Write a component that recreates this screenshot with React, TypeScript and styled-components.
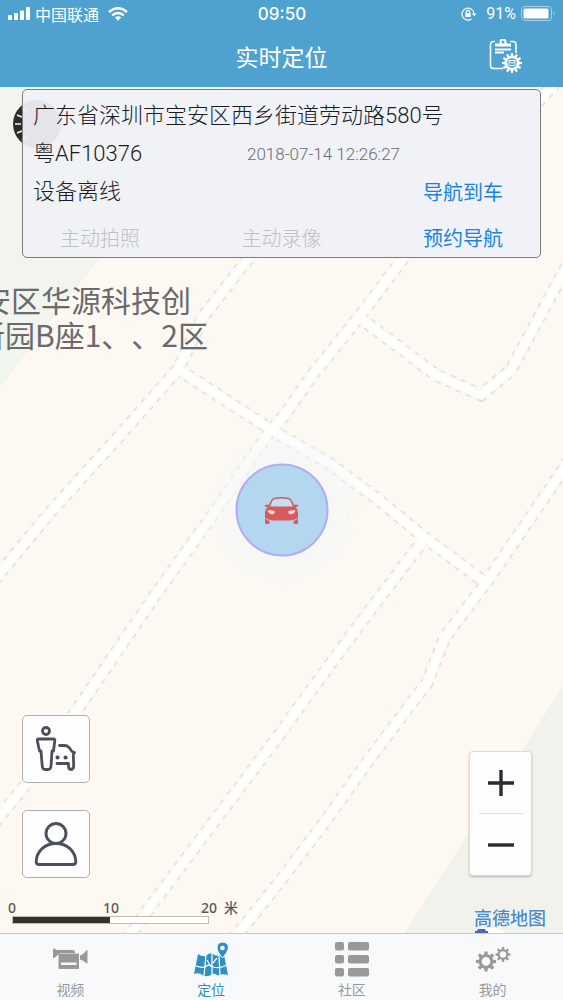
import React from "react";
import styled, { createGlobalStyle } from "styled-components";

const GlobalStyle = createGlobalStyle`
  * { box-sizing: border-box; }
  body {
    margin: 0;
    background: #fdf9f2;
    font-family: "Liberation Sans", "Noto Sans CJK SC", sans-serif;
  }
  button {
    margin: 0;
    padding: 0;
    border: 0;
    background: none;
    font: inherit;
    color: inherit;
    cursor: pointer;
  }
  svg { display: block; }
`;

const Screen = styled.div`
  display: flex;
  flex-direction: column;
  min-height: 100vh;
  overflow: hidden;
`;

const Header = styled.header`
  background: #4fa2d0;
  color: #fff;
`;

const StatusBar = styled.div`
  display: grid;
  grid-template-columns: 1fr auto 1fr;
  align-items: center;
  height: 28px;
  padding: 0 7px 0 8px;
  font-size: 16px;
  line-height: 20px;
`;

const StatusGroup = styled.div<{ $end?: boolean }>`
  display: flex;
  align-items: center;
  gap: ${(p) => (p.$end ? 5 : 9)}px;
  justify-content: ${(p) => (p.$end ? "flex-end" : "flex-start")};
  font-family: ${(p) => (p.$end ? "Roboto" : '"Noto Sans CJK SC"')}, sans-serif;
`;

const Carrier = styled.span`
  display: flex;
  align-items: center;
  gap: 5px;
`;

const Charge = styled.span`
  margin-left: 4px;
`;

const Clock = styled.time`
  font-family: Inter, sans-serif;
  font-size: 17px;
  font-weight: 500;
`;

const TitleBar = styled.div`
  display: grid;
  grid-template-columns: 1fr auto 1fr;
  align-items: center;
  height: 59px;
  padding: 0 40px 3px;
`;

const Title = styled.h1`
  grid-column: 2;
  margin: 0;
  font-family: "Noto Sans CJK SC", sans-serif;
  font-size: 23px;
  font-weight: 400;
  line-height: 32px;
`;

const SettingsButton = styled.button`
  justify-self: end;
`;

const MapArea = styled.main`
  position: relative;
  flex: 1;
  display: flex;
  flex-direction: column;
  justify-content: space-between;
  overflow: hidden;
`;

const MapCanvas = styled.svg`
  position: absolute;
  inset: 0;
  width: 100%;
  height: 100%;
`;

const PlaceName = styled.div`
  position: absolute;
  top: 195px;
  left: -25px;
  color: #6a6a6c;
  font-family: "Noto Sans CJK SC", sans-serif;
  font-size: 30px;
  font-weight: 400;
  line-height: 35px;
  text-indent: 6px;
  text-spacing-trim: space-all;
  font-kerning: none;
  white-space: nowrap;

  span {
    display: block;
  }
  span + span {
    text-indent: 0;
  }
`;

const CarPin = styled.div`
  position: absolute;
  top: 50%;
  left: 50%;
  display: grid;
  place-items: center;
  width: 93px;
  height: 93px;
  border: 2px solid #b3acf0;
  border-radius: 50%;
  background: #b4d7f0;
  box-shadow: 0 0 20px 24px rgba(244, 246, 248, 0.6);
  transform: translate(-50%, -50%);
`;

const InfoCard = styled.section`
  position: relative;
  margin: 2px 22px 0;
  height: 169px;
  padding: 7px 10px 0;
  border: 1px solid #7c7d80;
  border-radius: 5px;
  background: rgba(239, 241, 246, 0.94);
  color: #1c1c1f;
  font-family: Roboto, "Noto Sans CJK SC", sans-serif;
  font-size: 22px;
  font-weight: 300;
  line-height: 38px;
`;

const Address = styled.p`
  margin: 0;
  white-space: nowrap;
`;

const InfoRow = styled.div`
  display: grid;
  grid-template-columns: 214px 1fr auto;
  align-items: center;
  height: 38px;
`;

const Stamp = styled.time`
  color: #6c6d71;
  font-size: 17px;
`;

const ActionRow = styled.div`
  display: flex;
  justify-content: space-between;
  margin-top: 9px;
  padding: 0 27px;
  height: 38px;
`;

const ActionButton = styled.button<{ $inset?: boolean }>`
  margin-right: ${(p) => (p.$inset ? 27 : 0)}px;
  padding-top: ${(p) => (p.$inset ? 2 : 0)}px;
  font-size: 20px;
  font-weight: 400;
  line-height: 36px;
  color: #1b82e0;
  &:disabled {
    font-weight: 300;
    color: #bfc0c4;
    cursor: default;
  }
`;

const Controls = styled.div`
  position: relative;
  padding-bottom: 5px;
`;

const ControlRow = styled.div`
  display: flex;
  align-items: flex-end;
  justify-content: space-between;
  padding: 0 31px 0 22px;
`;

const LocateStack = styled.div`
  display: grid;
  gap: 27px;
`;

const LocateButton = styled.button`
  display: grid;
  place-items: center;
  width: 68px;
  height: 68px;
  border: 1px solid #aeaeb0;
  border-radius: 5px;
  background: #fefeff;
`;

const ZoomPanel = styled.div`
  display: flex;
  flex-direction: column;
  align-items: center;
  width: 63px;
  margin-bottom: 2px;
  border: 1px solid #dcdcdc;
  border-radius: 4px;
  background: #fdfdfe;
  box-shadow: 0 1px 2px rgba(0, 0, 0, 0.25);
`;

const ZoomButton = styled.button`
  display: grid;
  place-items: center;
  width: 100%;
  height: 61px;
`;

const ZoomDivider = styled.span`
  width: 44px;
  height: 1px;
  background: #dfdfe0;
`;

const FootRow = styled.div`
  display: flex;
  justify-content: space-between;
  align-items: flex-start;
  margin-top: 21px;
  padding: 0 17px 0 8px;
  height: 29px;
`;

const ScaleLabels = styled.div`
  display: grid;
  grid-template-columns: 95px 98px 23px auto;
  font-family: "Noto Sans", "Noto Sans CJK SC", sans-serif;
  font-size: 14px;
  font-weight: 500;
  line-height: 17px;
  color: #5a5856;
`;

const ScaleTrack = styled.div`
  width: 197px;
  height: 8px;
  margin-left: 4px;
  border: 1px solid #c0bfac;
  background: linear-gradient(to right, #35322d 50%, #fffefa 50%);
`;

const MapBrand = styled.span`
  margin-top: 8px;
  color: #4a8cca;
  font-family: "Noto Sans CJK SC", sans-serif;
  font-size: 18px;
  font-weight: 500;
  line-height: 20px;
  text-shadow: 0 0 2px #fff;
`;

const TabBar = styled.nav`
  display: grid;
  grid-template-columns: repeat(4, 1fr);
  height: 67px;
  border-top: 1px solid #c9c9cb;
  background: #f8f9fb;
`;

const Tab = styled.a<{ $active?: boolean }>`
  display: flex;
  flex-direction: column;
  align-items: center;
  padding-top: 7px;
  gap: 2px;
  color: ${(p) => (p.$active ? "#2f8fc1" : "#98999b")};
  font-family: "Noto Sans CJK SC", sans-serif;
  font-size: 14px;
  line-height: 20px;
  text-decoration: none;
`;

const ROADS = [
  "M255 250 L203 317 L178 369 L130 424 L47 516 L0 573 L-10 585",
  "M178 369 L270 429 L330 464 L380 501 L425 538 L486 583",
  "M410 249 L402 260 L359 317 L314 373 L283 417 L268 434 L219 506 L154 597 L81 704 L27 783 L-5 822",
  "M359 317 L436 375 L481 395 L511 370 L534 327 L570 260",
  "M575 450 L563 470 L535 511 L486 583 L445 637 L427 683 L414 700 L371 757 L324 823 L281 880 L232 941",
  "M425 538 L359 625 L304 700 L282 731 L150 907 L126 941",
  "M530 110 L560 78",
];

function CityMap() {
  return (
    <MapCanvas viewBox="0 87 563 846" preserveAspectRatio="xMidYMid slice" aria-hidden="true">
      <rect x="-600" y="-600" width="1800" height="2200" fill="#fdf9f2" />
      <path d="M-600 87 H230 L100 258 L0 387 L-600 1160 Z" fill="#f2f4ee" />
      <path d="M1100 0 L563 686 L472 828 L400 940 H1100 Z" fill="#f2f2ec" />
      {ROADS.map((d) => (
        <path key={d} d={d} fill="none" stroke="#dfdfde" strokeWidth="13" strokeDasharray="5 6" />
      ))}
      {ROADS.map((d) => (
        <path key={d} d={d} fill="none" stroke="#fdfbf7" strokeWidth="10" strokeLinejoin="round" />
      ))}
      {ROADS.map((d) => (
        <path key={d} d={d} fill="none" stroke="#fffffd" strokeWidth="6" strokeLinejoin="round" />
      ))}
      <circle cx="37" cy="124" r="24" fill="#2e2d2b" />
      <path d="M15 124h6M17 115l5 2M17 133l5-2M22 108l4 4M22 140l4-4" stroke="#f4f4f0" strokeWidth="1.5" />
      <ellipse cx="490" cy="933" rx="14" ry="5" fill="#fff" />
      <path d="M475 933V931H477L478 929H485L486 931H488V933Z" fill="#4a67c0" />
    </MapCanvas>
  );
}

function CarIcon() {
  return (
    <svg width="36" height="28" viewBox="0 0 36 28">
      <path d="M6 10 Q8 2.500 11 2 Q18 .6 25 2 Q28 2.500 30 10" fill="#c5def0" stroke="#c85c64" strokeWidth="1.500" />
      <path d="M1 8.500 L5 8 L6 10 H30 L31 8 L35 8.500 L34.500 10 L32 10.500 Q34.500 13 34.500 16 V26 Q34.500 27.500 33 27.500 H31.500 Q30 27.500 30 26 V24 H6 V26 Q6 27.500 4.500 27.500 H3 Q1.500 27.500 1.500 26 V16 Q1.500 13 4 10.500 L1.500 10 Z" fill="#d95a5c" />
      <path d="M2 22 Q4 24 8 24 M34 22 Q32 24 28 24" stroke="#b4d7f0" strokeWidth="1" fill="none" />
      <path d="M4 14 Q8 13 11.500 15 Q11.500 17.500 9 17.800 Q5 17.500 4 14 Z M32 14 Q28 13 24.500 15 Q24.500 17.500 27 17.800 Q31 17.500 32 14 Z" fill="#f3dfe3" />
    </svg>
  );
}

function gearPath(cx: number, cy: number, outer: number, inner: number, teeth: number, hole: number) {
  const step = (Math.PI * 2) / teeth;
  const at = (r: number, a: number) => `${(cx + r * Math.cos(a)).toFixed(2)} ${(cy + r * Math.sin(a)).toFixed(2)}`;
  const points: string[] = [];
  for (let i = 0; i < teeth; i += 1) {
    const a = i * step - Math.PI / 2;
    points.push(at(inner, a - step * 0.3), at(outer, a - step * 0.2), at(outer, a + step * 0.2), at(inner, a + step * 0.3));
  }
  return `M${points.join("L")}Z M${cx - hole} ${cy}a${hole} ${hole} 0 1 0 ${hole * 2} 0a${hole} ${hole} 0 1 0 ${-hole * 2} 0Z`;
}

function ClipboardGearIcon() {
  return (
    <svg width="34" height="36" viewBox="0 0 34 36" fill="none">
      <path d="M6 3.500H4.500Q1.500 3.500 1.500 6.500V27Q1.500 30.500 4.500 30.500H14M21 3.500H24Q27 3.500 27 6.500V15" stroke="#fff" strokeWidth="1.600" />
      <path d="M6 5.500H10.500V3Q10.500 1 12.500 1H15.500Q17.500 1 17.500 3V5.500H22V8.500H6Z" fill="#fff" />
      <circle cx="14" cy="4" r="1.500" fill="#4fa2d0" />
      <path d="M6 11.500H22M6 14.500H15" stroke="#fff" strokeWidth="1.800" />
      <path d={gearPath(23, 25, 10, 7.5, 12, 4.8)} fill="#fff" fillRule="evenodd" />
      <rect x="20" y="22.500" width="6" height="5" rx="1" stroke="#fff" />
      <path d="M20 23l3 2.500l3-2.500" stroke="#fff" />
    </svg>
  );
}

function PersonCarIcon() {
  return (
    <svg width="42" height="48" viewBox="0 0 42 48" fill="none" stroke="#4a505f" strokeWidth="2.800" strokeLinecap="round" strokeLinejoin="round">
      <circle cx="11" cy="6" r="3.500" />
      <path d="M3.500 14H18.500Q20 14 19.800 15.500L18.500 26H17L16 41Q15.800 44.500 13 44.500H10Q7.500 44.500 7.200 41L6 26H4.500L2.300 15.500Q2 14 3.500 14Z" />
      <path d="M24.500 20.500H30Q32.500 20.500 34.500 23L37 26.500L39.500 27.500L38.300 29.500L38.700 40Q38.700 44.500 36 44.500Q33.500 44.500 33.500 41V38.500H22" />
      <path d="M22.500 32.500h.1M30.500 32.500h.1" strokeWidth="4.200" />
    </svg>
  );
}

function PersonIcon() {
  return (
    <svg width="44" height="46" viewBox="0 0 44 46" fill="none" stroke="#4a505f" strokeWidth="2.900" strokeLinejoin="round">
      <circle cx="22" cy="12.500" r="10" />
      <path d="M22 22.500C11 22.500 2.500 30 2.200 40.500Q2.200 43.500 5 43.500H39Q41.800 43.500 41.800 40.500C41.500 30 33 22.500 22 22.500Z" />
    </svg>
  );
}

function VideoIcon() {
  return (
    <svg width="36" height="36" viewBox="0 0 36 36" fill="currentColor">
      <path d="M1 8.500Q1 7.500 2 7.500L5 9H21Q23 9 23 12H8L4 15.500L2.500 17Q1 17 1 16Z" />
      <path fillRule="evenodd" d="M7.500 12.500H26Q27 12.500 27 13.500V27Q27 28 26 28H7.500Q6.500 28 6.500 27V13.500Q6.500 12.500 7.500 12.500ZM9 21.500V24H24.500V21.500Z" />
      <path d="M28 14.500Q32 13.500 34 9.500L35.500 9V22.500L34 22Q32 19.500 28 18.500Z" />
    </svg>
  );
}

function MapTabIcon() {
  return (
    <svg width="36" height="36" viewBox="0 0 36 36" fill="none">
      <path d="M5 13Q9 16 12.500 15Q16 12 19 12Q22 15.500 26 14.500L31 14L35 34Q29 32.500 25 34.500Q20 31 17 34.500Q11 36.500 8 33Q4 31.500 1 33Z" fill="currentColor" />
      <path d="M13 14L11 35M19 12V35M26 14L27 35M2 24.500Q8 27 12 26Q17 22 20 26Q26 28 34 24M14 19L18 26M20 22L24 17" stroke="#f8f9fb" strokeWidth="1.300" />
      <path d="M29.500 1Q35.500 1.500 35.500 7Q35 10.500 29.500 17Q24 10.500 24 7Q24 1.500 29.500 1Z" fill="currentColor" stroke="#f8f9fb" />
      <circle cx="29.500" cy="7" r="2.300" fill="#f8f9fb" />
    </svg>
  );
}

function ListIcon() {
  return (
    <svg width="36" height="36" viewBox="0 0 36 36" fill="currentColor">
      {[1, 14, 27].map((y) => (
        <g key={y}>
          <rect x="1" y={y} width="9" height="8.500" rx="2" />
          <rect x="14" y={y} width="21" height="8.500" rx="2" />
        </g>
      ))}
    </svg>
  );
}

function GearsIcon() {
  return (
    <svg width="36" height="36" viewBox="0 0 36 36" fill="currentColor" fillRule="evenodd">
      <path d={gearPath(11, 20.5, 10.2, 7.4, 8, 4.4)} />
      <path d={gearPath(28, 13.5, 7.5, 5.4, 8, 3.2)} />
    </svg>
  );
}

function SignalIcon() {
  return (
    <svg width="22" height="14" viewBox="0 0 22 14" fill="#fff">
      <rect x="0" y="8" width="4" height="5" rx="1" />
      <rect x="6" y="6" width="4" height="7" rx="1" />
      <rect x="12" y="3.500" width="4" height="9.500" rx="1" />
      <rect x="18" y="0" width="4" height="13" rx="1" />
    </svg>
  );
}

function WifiIcon() {
  return (
    <svg width="20" height="14" viewBox="0 0 20 14" fill="none" stroke="#fff" strokeWidth="2.400">
      <path d="M1 5Q10-2.500 19 5M4.200 8.300Q10 3.500 15.800 8.300" />
      <path d="M6.800 10.500Q10 8 13.200 10.500L10 13.700Z" fill="#fff" stroke="none" />
    </svg>
  );
}

function LockIcon() {
  return (
    <svg width="16" height="14" viewBox="0 0 16 14" fill="none" stroke="#fff" strokeWidth="1.200">
      <path d="M10.500 12A6 6 0 1 1 13 7" />
      <path d="M11 6.500H15.400L13.200 9.500Z" fill="#fff" stroke="none" />
      <rect x="4.300" y="6" width="5.400" height="4" fill="#fff" stroke="none" />
      <path d="M5.300 6.500V5Q5.300 3.400 7 3.400T8.700 5V6.500" />
    </svg>
  );
}

function BatteryIcon() {
  return (
    <svg width="35" height="16" viewBox="0 0 35 16">
      <rect x=".5" y=".5" width="30" height="14" rx="3.500" fill="none" stroke="#a8d0e7" />
      <rect x="2.500" y="2.500" width="25" height="10" rx="1.500" fill="#fff" />
      <path d="M32.500 5Q34.500 7.500 32.500 10Z" fill="#a8d0e7" />
    </svg>
  );
}

const TABS = [
  { id: "video", label: "视频", Icon: VideoIcon },
  { id: "locate", label: "定位", Icon: MapTabIcon },
  { id: "community", label: "社区", Icon: ListIcon },
  { id: "mine", label: "我的", Icon: GearsIcon },
];

export default function App() {
  return (
    <Screen>
      <GlobalStyle />
      <Header>
        <StatusBar>
          <StatusGroup>
            <Carrier>
              <SignalIcon />
              中国联通
            </Carrier>
            <WifiIcon />
          </StatusGroup>
          <Clock>09:50</Clock>
          <StatusGroup $end>
            <LockIcon />
            <Charge>91%</Charge>
            <BatteryIcon />
          </StatusGroup>
        </StatusBar>
        <TitleBar>
          <Title>实时定位</Title>
          <SettingsButton aria-label="设置">
            <ClipboardGearIcon />
          </SettingsButton>
        </TitleBar>
      </Header>

      <MapArea>
        <CityMap />
        <PlaceName>
          <span>安区华源科技创</span>
          <span>新园B座1、、2区</span>
        </PlaceName>
        <CarPin>
          <CarIcon />
        </CarPin>

        <InfoCard>
          <Address>广东省深圳市宝安区西乡街道劳动路580号</Address>
          <InfoRow>
            <span>粤AF10376</span>
            <Stamp dateTime="2018-07-14T12:26:27">2018-07-14 12:26:27</Stamp>
          </InfoRow>
          <InfoRow>
            <span>设备离线</span>
            <span />
            <ActionButton $inset>导航到车</ActionButton>
          </InfoRow>
          <ActionRow>
            <ActionButton disabled>主动拍照</ActionButton>
            <ActionButton disabled>主动录像</ActionButton>
            <ActionButton>预约导航</ActionButton>
          </ActionRow>
        </InfoCard>

        <Controls>
          <ControlRow>
            <LocateStack>
              <LocateButton aria-label="人车位置">
                <PersonCarIcon />
              </LocateButton>
              <LocateButton aria-label="我的位置">
                <PersonIcon />
              </LocateButton>
            </LocateStack>
            <ZoomPanel>
              <ZoomButton aria-label="放大">
                <svg width="26" height="26" viewBox="0 0 26 26">
                  <path d="M0 13H26M13 0V26" stroke="#2a2a33" strokeWidth="3.400" />
                </svg>
              </ZoomButton>
              <ZoomDivider />
              <ZoomButton aria-label="缩小">
                <svg width="26" height="26" viewBox="0 0 26 26">
                  <path d="M0 13H26" stroke="#2a2a33" strokeWidth="3.400" />
                </svg>
              </ZoomButton>
            </ZoomPanel>
          </ControlRow>
          <FootRow>
            <div>
              <ScaleLabels>
                <span>0</span>
                <span>10</span>
                <span>20</span>
                <span>米</span>
              </ScaleLabels>
              <ScaleTrack />
            </div>
            <MapBrand>高德地图</MapBrand>
          </FootRow>
        </Controls>
      </MapArea>

      <TabBar>
        {TABS.map(({ id, label, Icon }) => (
          <Tab key={id} href={`#${id}`} $active={id === "locate"}>
            <Icon />
            {label}
          </Tab>
        ))}
      </TabBar>
    </Screen>
  );
}
